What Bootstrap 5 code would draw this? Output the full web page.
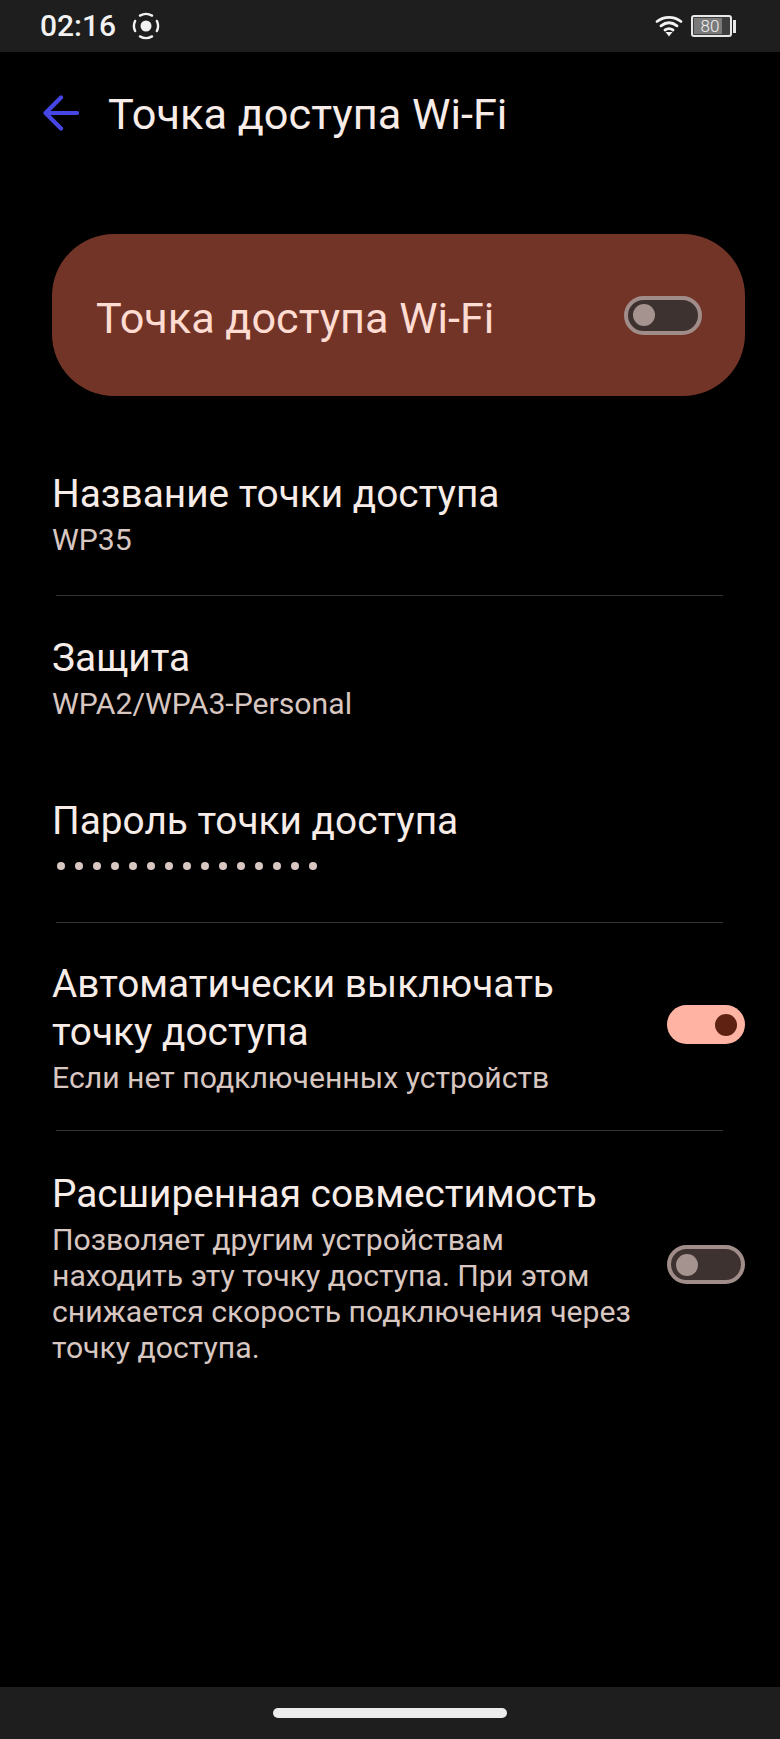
<!DOCTYPE html>
<html lang="ru">
<head>
  <meta charset="UTF-8">
  <meta name="viewport" content="width=device-width, initial-scale=1.0">
  <title>Точка доступа Wi-Fi</title>
  <link href="https://cdn.jsdelivr.net/npm/bootstrap@5.3.0/dist/css/bootstrap.min.css" rel="stylesheet">
  <style>
    body {
      background-color: #000;
      font-family: Roboto, "Liberation Sans", sans-serif;
      color: #f7ece8;
    }
    .phone {
      width: 780px;
      height: 1739px;
    }
    .status-bar {
      height: 52px;
      background-color: #1e1e1e;
      padding: 0 44px 0 40px;
    }
    .status-time {
      font-size: 30px;
      font-weight: 500;
      line-height: 1;
      color: #f2f2f2;
    }
    .batt {
      width: 41px;
      height: 22px;
      border: 2px solid #e8e8e8;
      border-radius: 3px;
      padding: 1px;
      background-color: #3e3e3e;
    }
    .batt-fill {
      width: 80%;
      padding-left: 4px;
      background-color: #7a7a7a;
      font-size: 17px;
      font-weight: 300;
      line-height: 16px;
      color: #f2f2f2;
      text-align: center;
    }
    .batt-tip {
      width: 3px;
      height: 13px;
      background-color: #e8e8e8;
      margin-left: 1px;
    }
    .head-row {
      height: 126px;
      padding-left: 43px;
    }
    .head-arrow {
      margin-bottom: 5px;
    }
    .head-title {
      font-size: 43.3px;
      line-height: 1;
      margin-left: 29px;
    }
    .hero {
      margin: 56px 35px 0 52px;
      height: 162px;
      border-radius: 62px;
      background-color: #733428;
      padding: 0 43px 0 44px;
      color: #ffdcd2;
      font-size: 43.2px;
    }
    .hero-text {
      padding-top: 8px;
    }
    .tgl {
      width: 78px;
      height: 39px;
      border-radius: 20px;
      flex-shrink: 0;
    }
    .tgl-off {
      background-color: #3d3230;
      border: 4px solid #a08d89;
      padding-left: 5px;
    }
    .tgl-off i {
      width: 22px;
      height: 22px;
      background-color: #a5938f;
    }
    .tgl-on {
      background-color: #ffb4a3;
      padding-right: 8px;
    }
    .tgl-on i {
      width: 22px;
      height: 22px;
      background-color: #5f2112;
    }
    .tgl i {
      display: block;
      border-radius: 50%;
    }
    .tgl-lift {
      margin-bottom: 6px;
    }
    .setting-list {
      margin: 0 35px 0 52px;
      padding-top: 36px;
    }
    .set-item {
      padding: 38px 0;
    }
    .set-tight {
      padding: 37px 0 35px;
    }
    .set-last {
      padding-top: 39px;
    }
    .item-title {
      font-size: 38.8px;
      line-height: 48px;
    }
    .item-sub {
      font-size: 30.2px;
      line-height: 36px;
      margin: 4px 0 -1px;
      color: #d8c6c1;
    }
    .sep {
      height: 1px;
      background-color: #333;
      margin-left: 4px;
      margin-right: 22px;
    }
    .pw-dots {
      height: 36px;
      margin-top: 3px;
      gap: 10px;
      padding-left: 5px;
    }
    .pw-dots span {
      width: 8px;
      height: 8px;
      border-radius: 50%;
      background-color: #d8c6c1;
    }
    .nav-strip {
      height: 52px;
      background-color: #1e1e1e;
    }
    .nav-handle {
      width: 234px;
      height: 10px;
      border-radius: 5px;
      background-color: #ececec;
    }
  </style>
</head>
<body>
<div class="phone d-flex flex-column">
  <div class="status-bar d-flex align-items-center justify-content-between">
    <div class="d-flex align-items-center gap-3">
      <span class="status-time">02:16</span>
      <svg width="28" height="28" viewBox="0 0 28 28" fill="none" stroke="#f2f2f2" stroke-width="2.4" stroke-linecap="round">
        <circle cx="14" cy="14" r="5.5" fill="#f2f2f2" stroke="none"/>
        <path d="M8 3.600A12 12 0 0 1 20 3.600M24.900 8.900A12 12 0 0 1 24.900 19.100M20 24.400A12 12 0 0 1 8 24.400M3.100 19.100A12 12 0 0 1 3.100 8.900"/>
      </svg>
    </div>
    <div class="d-flex align-items-center">
      <svg class="me-2" width="28" height="22" viewBox="0 0 28 22" fill="none" stroke="#f2f2f2" stroke-width="2.8" stroke-linecap="round">
        <path d="M2 6.500C9 1 19 1 26 6.500"/>
        <path d="M6 10.800C11 7 17 7 22 10.800"/>
        <path d="M10 15C12.500 13.300 15.500 13.300 18 15"/>
        <path d="M10.500 17h7L14 21.500z" fill="#f2f2f2" stroke="none"/>
      </svg>
      <div class="batt d-flex"><div class="batt-fill">80</div></div>
      <div class="batt-tip"></div>
    </div>
  </div>

  <div class="head-row d-flex align-items-center">
    <svg class="head-arrow" width="36" height="36" viewBox="0 0 36 36" fill="none" stroke="#4646e4" stroke-width="4.2" stroke-linecap="round" stroke-linejoin="round">
      <path d="M34 18H3M18 2.500 2.500 18 18 33.500"/>
    </svg>
    <span class="head-title">Точка доступа Wi-Fi</span>
  </div>

  <div class="hero d-flex align-items-center justify-content-between">
    <span class="hero-text">Точка доступа Wi-Fi</span>
    <div class="tgl tgl-off d-flex align-items-center"><i></i></div>
  </div>

  <div class="setting-list flex-grow-1">
    <div class="set-item">
      <div class="item-title">Название точки доступа</div>
      <div class="item-sub">WP35</div>
    </div>
    <div class="sep"></div>
    <div class="set-item">
      <div class="item-title">Защита</div>
      <div class="item-sub">WPA2/WPA3-Personal</div>
    </div>
    <div class="set-item">
      <div class="item-title">Пароль точки доступа</div>
      <div class="pw-dots d-flex align-items-center">
        <span></span><span></span><span></span><span></span><span></span>
        <span></span><span></span><span></span><span></span><span></span>
        <span></span><span></span><span></span><span></span><span></span>
      </div>
    </div>
    <div class="sep"></div>
    <div class="set-tight d-flex align-items-center justify-content-between">
      <div>
        <div class="item-title">Автоматически выключать<br>точку доступа</div>
        <div class="item-sub">Если нет подключенных устройств</div>
      </div>
      <div class="tgl tgl-on tgl-lift d-flex align-items-center justify-content-end"><i></i></div>
    </div>
    <div class="sep"></div>
    <div class="set-last d-flex align-items-center justify-content-between">
      <div>
        <div class="item-title">Расширенная совместимость</div>
        <div class="item-sub">Позволяет другим устройствам<br>находить эту точку доступа. При этом<br>снижается скорость подключения через<br>точку доступа.</div>
      </div>
      <div class="tgl tgl-off tgl-lift d-flex align-items-center"><i></i></div>
    </div>
  </div>

  <div class="nav-strip d-flex align-items-center justify-content-center"><div class="nav-handle"></div></div>
</div>
<script src="https://cdn.jsdelivr.net/npm/bootstrap@5.3.0/dist/js/bootstrap.bundle.min.js"></script>
</body>
</html>
